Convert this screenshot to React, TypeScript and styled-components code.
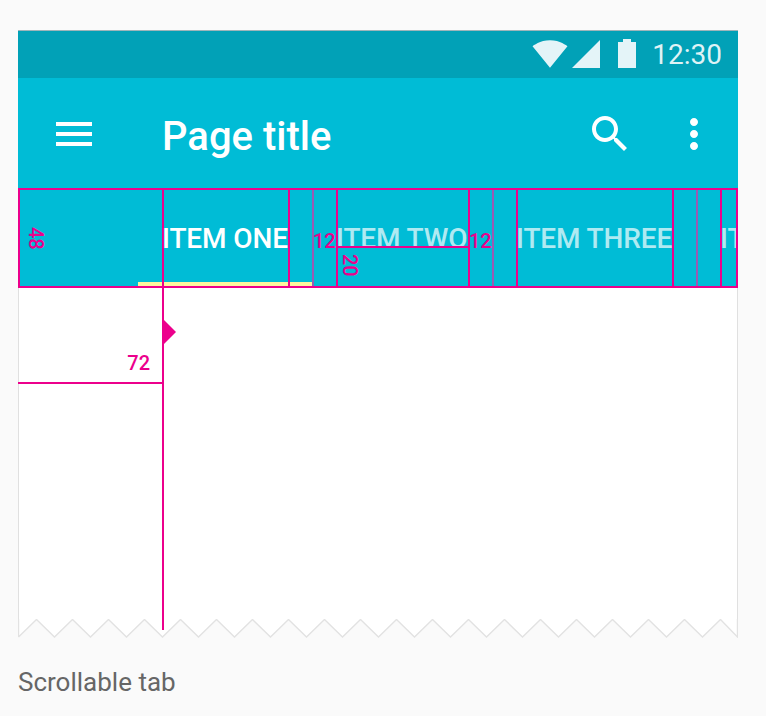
import styled, { createGlobalStyle } from "styled-components";

const PINK = "#ec008c";

const GlobalStyle = createGlobalStyle`
  html, body {
    margin: 0;
    padding: 0;
    background: #fafafa;
    font-family: Roboto, "Liberation Sans", sans-serif;
  }
`;

const tabCells = [
  { width: 142, variant: "lead" },
  { width: 126, label: "ITEM ONE", active: true },
  { width: 24 },
  { width: 24, soft: true, spec: "12" },
  { width: 132, label: "ITEM TWO", measure: true },
  { width: 24, spec: "12" },
  { width: 24, soft: true },
  { width: 156, label: "ITEM THREE" },
  { width: 24 },
  { width: 24, soft: true },
  { width: 16, label: "IT" },
];

const zigzag = Array.from({ length: 41 }, (_, i) =>
  `${Math.min(i * 18 + 0.5, 719.5)},${i % 2 === 0 ? 18 : 0.5}`
).join(" L");

export default function App() {
  return (
    <>
      <GlobalStyle />
      <Page>
        <Frame>
          <StatusBar>
            <StatusIcon width="36" height="28" viewBox="0 3 24 18.5">
              <path d="M12.01 21.49L23.64 7c-.45-.34-4.93-4-11.64-4C5.28 3 .81 6.66.36 7l11.63 14.49.01.01.01-.01z" />
            </StatusIcon>
            <StatusIcon width="28" height="28" viewBox="0 0 28 28">
              <path d="M0 28h28V0z" />
            </StatusIcon>
            <BatteryIcon width="18" height="29" viewBox="0 0 18 29">
              <path d="M0 3h5V0h8v3h5v26H0z" />
            </BatteryIcon>
            <Clock>12:30</Clock>
          </StatusBar>
          <AppBar>
            <MenuIcon width="36" height="24" viewBox="0 0 36 24">
              <path d="M0 0h36v4H0zM0 10h36v4H0zM0 20h36v4H0z" />
            </MenuIcon>
            <Title>Page title</Title>
            <ActionIcon width="48" height="48" viewBox="0 0 24 24">
              <path d="M15.5 14h-.79l-.28-.27C15.41 12.59 16 11.11 16 9.5 16 5.91 13.09 3 9.5 3S3 5.91 3 9.5 5.91 16 9.5 16c1.61 0 3.09-.59 4.23-1.57l.27.28v.79l5 4.99L20.49 19l-4.99-5zm-6 0C7.01 14 5 11.99 5 9.5S7.01 5 9.5 5 14 7.01 14 9.5 11.99 14 9.5 14z" />
            </ActionIcon>
            <ActionIcon width="48" height="48" viewBox="0 0 24 24">
              <path d="M12 8c1.1 0 2-.9 2-2s-.9-2-2-2-2 .9-2 2 .9 2 2 2zm0 2c-1.1 0-2 .9-2 2s.9 2 2 2 2-.9 2-2-.9-2-2-2zm0 6c-1.1 0-2 .9-2 2s.9 2 2 2 2-.9 2-2-.9-2-2-2z" />
            </ActionIcon>
          </AppBar>
          <TabRow>
            <Indicator />
            {tabCells.map((cell, i) => (
              <TabCell key={i} $width={cell.width} $first={i === 0} $soft={cell.soft}>
                {cell.variant === "lead" && <SideSpec>48</SideSpec>}
                {cell.label && <TabLabel $active={cell.active}>{cell.label}</TabLabel>}
                {cell.spec && <Spec>{cell.spec}</Spec>}
                {cell.measure && (
                  <>
                    <BaselineRule />
                    <BaselineSpec>20</BaselineSpec>
                  </>
                )}
              </TabCell>
            ))}
          </TabRow>
          <Body>
            <KeylineGuide />
            <KeylineMark />
            <InsetRule>
              <InsetSpec>72</InsetSpec>
            </InsetRule>
          </Body>
          <TornEdge width="720" height="19" viewBox="0 0 720 19">
            <path d={`M${zigzag} V0 H0.5 Z`} fill="#ffffff" />
            <path d={`M0.5 0 V18 M${zigzag} V0`} fill="none" stroke="#e2e2e2" strokeWidth="1.4" />
          </TornEdge>
        </Frame>
        <Caption>Scrollable tab</Caption>
      </Page>
    </>
  );
}

const Page = styled.div`
  width: 766px;
  height: 716px;
  padding: 30px 0 0 18px;
  box-sizing: border-box;
  overflow: hidden;
`;

const Frame = styled.div`
  width: 720px;
  display: flex;
  flex-direction: column;
`;

const StatusBar = styled.div`
  height: 48px;
  box-sizing: border-box;
  padding: 10px 16px 0 0;
  display: flex;
  justify-content: flex-end;
  align-items: flex-start;
  background: #01a1b7;
  border-top: 1px solid #9fb5ba;
`;

const StatusIcon = styled.svg`
  margin-top: -1px;
  margin-right: 4px;
  fill: #e4f4f8;
  flex-shrink: 0;
`;

const BatteryIcon = styled.svg`
  margin-top: -2px;
  margin-left: 14px;
  fill: #e4f4f8;
  flex-shrink: 0;
`;

const Clock = styled.span`
  margin-left: 16px;
  margin-top: -4px;
  font-size: 28px;
  line-height: 36px;
  color: rgba(255, 255, 255, 0.88);
`;

const AppBar = styled.div`
  height: 110px;
  box-sizing: border-box;
  padding: 2px 20px 0 38px;
  display: flex;
  align-items: center;
  background: #00bcd6;
`;

const MenuIcon = styled.svg`
  fill: #ffffff;
  flex-shrink: 0;
`;

const Title = styled.h1`
  margin: 6px 0 0 70px;
  flex: 1;
  font-size: 40px;
  font-weight: 500;
  line-height: 48px;
  color: #ffffff;
`;

const ActionIcon = styled.svg`
  fill: #ffffff;
  margin-left: 36px;
  flex-shrink: 0;
`;

const TabRow = styled.div`
  position: relative;
  height: 100px;
  box-sizing: border-box;
  display: flex;
  border: 2px solid ${PINK};
  background: #00bcd6;
`;

const Indicator = styled.div`
  position: absolute;
  left: 118px;
  bottom: 0;
  width: 174px;
  height: 4px;
  background: #fff59d;
`;

const TabCell = styled.div<{ $width: number; $first?: boolean; $soft?: boolean }>`
  position: relative;
  flex: 0 0 ${({ $width }) => $width}px;
  min-width: 0;
  display: flex;
  align-items: center;
  white-space: nowrap;
  box-shadow: ${({ $first, $soft }) =>
    $first ? "none" : `inset 2px 0 0 ${$soft ? "#9a5bb3" : PINK}`};
  &:last-child {
    overflow: hidden;
  }
`;

const TabLabel = styled.span<{ $active?: boolean }>`
  margin-top: 2px;
  font-size: 28px;
  font-weight: 500;
  line-height: 32px;
  letter-spacing: -0.12px;
  color: ${({ $active }) => ($active ? "#ffffff" : "rgba(255, 255, 255, 0.7)")};
`;

const Spec = styled.span`
  margin-top: 6px;
  margin-left: 1px;
  font-size: 20px;
  font-weight: 500;
  line-height: 24px;
  color: ${PINK};
`;

const SideSpec = styled.span`
  margin-left: 6px;
  writing-mode: vertical-rl;
  font-size: 20px;
  font-weight: 500;
  line-height: 20px;
  color: ${PINK};
`;

const BaselineRule = styled.div`
  position: absolute;
  left: 0;
  right: 0;
  top: 56px;
  height: 2px;
  background: ${PINK};
`;

const BaselineSpec = styled.span`
  position: absolute;
  left: 4px;
  top: 64px;
  writing-mode: vertical-rl;
  font-size: 20px;
  font-weight: 500;
  line-height: 20px;
  color: ${PINK};
`;

const Body = styled.div`
  position: relative;
  height: 331px;
  box-sizing: border-box;
  background: #ffffff;
  border-left: 1px solid #e0e0e0;
  border-right: 1px solid #e0e0e0;
`;

const KeylineGuide = styled.div`
  position: absolute;
  left: 143px;
  top: 0;
  width: 2px;
  height: 342px;
  background: ${PINK};
  z-index: 1;
`;

const KeylineMark = styled.div`
  position: absolute;
  left: 145px;
  top: 32px;
  border-left: 12px solid ${PINK};
  border-top: 12px solid transparent;
  border-bottom: 12px solid transparent;
`;

const InsetRule = styled.div`
  position: absolute;
  left: -1px;
  top: 94px;
  width: 144px;
  height: 2px;
  background: ${PINK};
`;

const InsetSpec = styled.span`
  position: absolute;
  right: 12px;
  bottom: 9px;
  font-size: 20px;
  font-weight: 500;
  line-height: 24px;
  color: ${PINK};
`;

const TornEdge = styled.svg`
  display: block;
`;

const Caption = styled.p`
  margin: 28px 0 0;
  font-size: 26px;
  line-height: 32px;
  color: #666666;
`;
